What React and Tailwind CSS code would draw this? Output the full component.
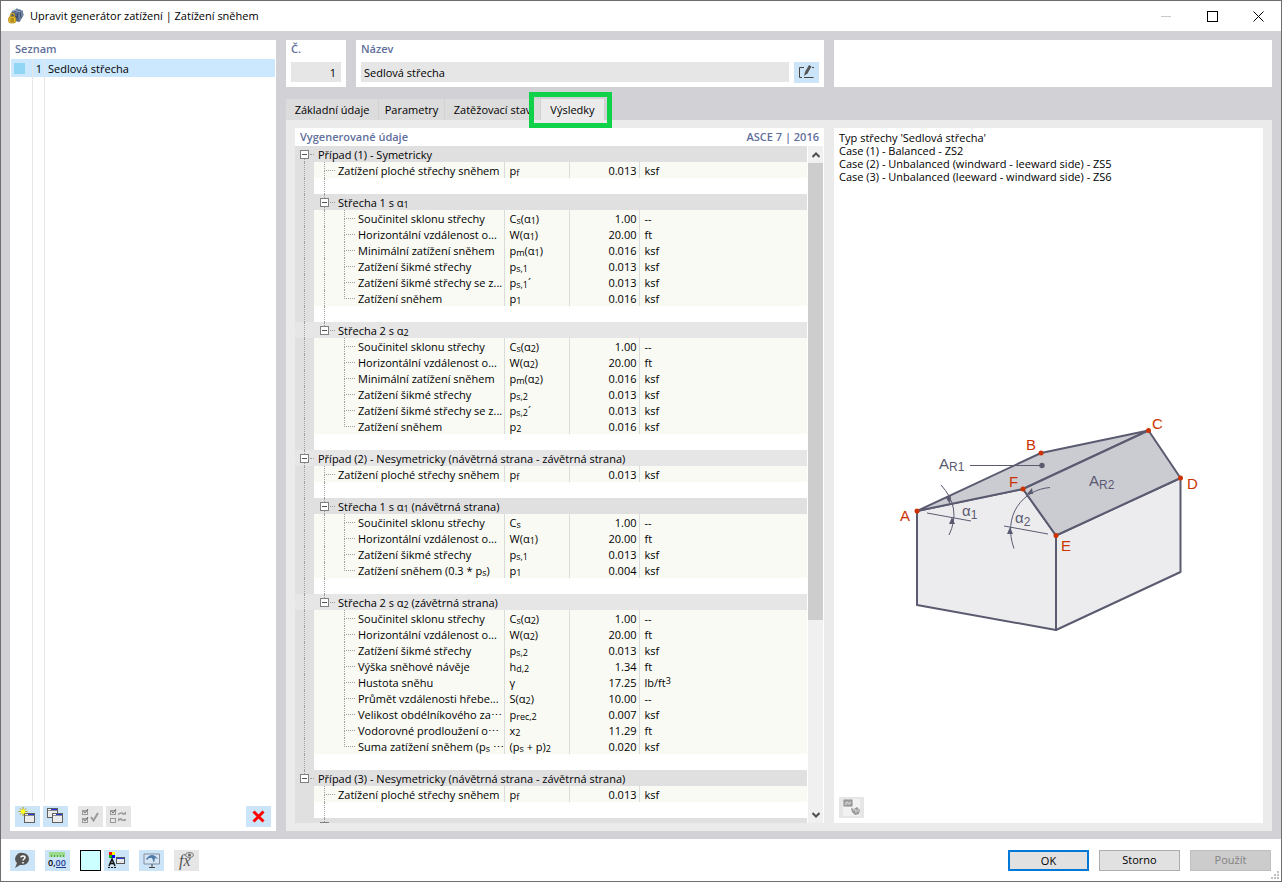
import { useState } from 'react';

const roof = (title, tone, last, rows) => ({ title, tone, last, rows });

const FLAT = ['Zatížení ploché střechy sněhem', 'p_{f}', '0.013', 'ksf'];

const cases = [
    {
        title: 'Případ (1) - Symetricky',
        tone: 'dark',
        roofs: [
            roof('Střecha 1 s α_{1}', 'dark', false, [
                ['Součinitel sklonu střechy', 'C_{s}(α_{1})', '1.00', '--'],
                ['Horizontální vzdálenost o...', 'W(α_{1})', '20.00', 'ft'],
                ['Minimální zatížení sněhem', 'p_{m}(α_{1})', '0.016', 'ksf'],
                ['Zatížení šikmé střechy', 'p_{s,1}', '0.013', 'ksf'],
                ['Zatížení šikmé střechy se z...', 'p_{s,1}´', '0.013', 'ksf'],
                ['Zatížení sněhem', 'p_{1}', '0.016', 'ksf'],
            ]),
            roof('Střecha 2 s α_{2}', 'light', true, [
                ['Součinitel sklonu střechy', 'C_{s}(α_{2})', '1.00', '--'],
                ['Horizontální vzdálenost o...', 'W(α_{2})', '20.00', 'ft'],
                ['Minimální zatížení sněhem', 'p_{m}(α_{2})', '0.016', 'ksf'],
                ['Zatížení šikmé střechy', 'p_{s,2}', '0.013', 'ksf'],
                ['Zatížení šikmé střechy se z...', 'p_{s,2}´', '0.013', 'ksf'],
                ['Zatížení sněhem', 'p_{2}', '0.016', 'ksf'],
            ]),
        ],
    },
    {
        title: 'Případ (2) - Nesymetricky (návětrná strana - závětrná strana)',
        tone: 'light',
        roofs: [
            roof('Střecha 1 s α_{1} (návětrná strana)', 'dark', false, [
                ['Součinitel sklonu střechy', 'C_{s}', '1.00', '--'],
                ['Horizontální vzdálenost o...', 'W(α_{1})', '20.00', 'ft'],
                ['Zatížení šikmé střechy', 'p_{s,1}', '0.013', 'ksf'],
                ['Zatížení sněhem (0.3 * p_{s})', 'p_{1}', '0.004', 'ksf'],
            ]),
            roof('Střecha 2 s α_{2} (závětrná strana)', 'light', true, [
                ['Součinitel sklonu střechy', 'C_{s}(α_{2})', '1.00', '--'],
                ['Horizontální vzdálenost o...', 'W(α_{2})', '20.00', 'ft'],
                ['Zatížení šikmé střechy', 'p_{s,2}', '0.013', 'ksf'],
                ['Výška sněhové návěje', 'h_{d,2}', '1.34', 'ft'],
                ['Hustota sněhu', 'γ', '17.25', 'lb/ft^{3}'],
                ['Průmět vzdálenosti hřebe...', 'S(α_{2})', '10.00', '--'],
                ['Velikost obdélníkového za⋯', 'p_{rec,2}', '0.007', 'ksf'],
                ['Vodorovné prodloužení o⋯', 'x_{2}', '11.29', 'ft'],
                ['Suma zatížení sněhem (p_{s} ⋯', '(p_{s} + p)_{2}', '0.020', 'ksf'],
            ]),
        ],
    },
    {
        title: 'Případ (3) - Nesymetricky (návětrná strana - závětrná strana)',
        tone: 'dark',
        last: true,
        roofs: [roof('Střecha 1 s α_{1} (závětrná strana)', 'dark', false, [])],
    },
];

// "p_{s}" -> p with a lowered s, "ft^{3}" -> ft with a raised 3
const Formula = ({ text }) =>
    text.split(/([_^]\{[^}]+\})/).map((part, i) => {
        if (part.startsWith('_{')) {
            return (
                <span key={i} className="relative top-px text-[9px] leading-none">
                    {part.slice(2, -1)}
                </span>
            );
        }
        if (part.startsWith('^{')) {
            return (
                <span key={i} className="relative -top-[3px] text-[9px] leading-none">
                    {part.slice(2, -1)}
                </span>
            );
        }
        return part;
    });

const CellText = ({ text }) => (
    <div className="h-4 leading-[18px] whitespace-pre">
        <Formula text={text} />
    </div>
);

const toneClass = { dark: 'bg-[#e0e0e0]', light: 'bg-[#e6e6e6]' };

const Toggle = ({ label, above, below }) => (
    <span className="flex h-4 items-center">
        <span className="flex w-[9px] flex-col items-center">
            <span className={`h-1 w-px border-dotted border-[#a0a0a0] ${above ? 'border-l' : ''}`} />
            <button
                aria-label={label}
                className="flex size-[9px] items-center justify-center border border-[#808080] bg-white"
            >
                <span className="h-px w-[5px] bg-[#505050]" />
            </button>
            <span className={`h-[3px] w-px border-dotted border-[#a0a0a0] ${below ? 'border-l' : ''}`} />
        </span>
        <span className="ml-px w-[5px] border-t border-dotted border-[#a0a0a0]" />
    </span>
);

const Branch = ({ last }) => (
    <span className="flex w-[14px] shrink-0 flex-col">
        <span className="h-[9px] w-[11px] border-b border-l border-dotted border-[#a0a0a0]" />
        <span className={`h-[7px] border-dotted border-[#a0a0a0] ${last ? '' : 'border-l'}`} />
    </span>
);

const Gutter = ({ line }) => (
    <td className="bg-[#e0e0e0] pl-[9px]">
        <div className={`h-4 border-dotted border-[#a0a0a0] ${line ? 'border-l' : ''}`} />
    </td>
);

const BlankRow = ({ gutterLine, line }) => (
    <tr className="h-4">
        <Gutter line={gutterLine} />
        <td colSpan={4} className="bg-white pl-[10px]">
            <div className={`h-4 border-dotted border-[#a0a0a0] ${line ? 'border-l' : ''}`} />
        </td>
    </tr>
);

const ValueRow = ({ row, level, gutterLine, line, last }) => (
    <tr className="h-4 bg-[#f9faf4]">
        <Gutter line={gutterLine} />
        <td className="overflow-hidden border-r border-[#dcdcdc] pl-[10px]">
            <div className="flex h-4">
                {level === 2 && (
                    <span className={`w-5 shrink-0 border-dotted border-[#a0a0a0] ${line ? 'border-l' : ''}`} />
                )}
                <Branch last={last} />
                <CellText text={row[0]} />
            </div>
        </td>
        <td className="border-r border-[#dcdcdc] pl-[5px]">
            <CellText text={row[1]} />
        </td>
        <td className="border-r border-[#dcdcdc] pr-[2px] text-right">
            <CellText text={row[2]} />
        </td>
        <td className="pl-[5px]">
            <CellText text={row[3]} />
        </td>
    </tr>
);

const CaseRows = ({ item, first }) => (
    <tbody>
        <tr className={`h-4 ${toneClass[item.tone]}`}>
            <td className="pl-[5px]">
                <Toggle label={item.title} above={!first} below={!item.last} />
            </td>
            <td colSpan={4} className="pl-1">
                <CellText text={item.title} />
            </td>
        </tr>
        <ValueRow row={FLAT} level={1} gutterLine={!item.last} />
        <BlankRow gutterLine={!item.last} line />
        {item.roofs.map((r) => (
            <RoofRows key={r.title} item={r} gutterLine={!item.last} />
        ))}
    </tbody>
);

const RoofRows = ({ item, gutterLine }) => (
    <>
        <tr className={`h-4 ${toneClass[item.tone]}`}>
            <td className="pl-[9px]">
                <div className={`h-4 border-dotted border-[#a0a0a0] ${gutterLine ? 'border-l' : ''}`} />
            </td>
            <td colSpan={4} className="pl-[6px]">
                <div className="flex h-4 gap-[3px]">
                    <Toggle label={item.title} above below={!item.last} />
                    <CellText text={item.title} />
                </div>
            </td>
        </tr>
        {item.rows.map((row, i) => (
            <ValueRow
                key={row[0]}
                row={row}
                level={2}
                gutterLine={gutterLine}
                line={!item.last}
                last={i === item.rows.length - 1}
            />
        ))}
        <BlankRow gutterLine={gutterLine} line={!item.last} />
    </>
);

const ToolButton = ({ label, disabled, children }) => (
    <button
        aria-label={label}
        disabled={disabled}
        className="flex h-[21px] w-[25px] items-center justify-center bg-[#cce4f7] disabled:bg-[#e6e6e6]"
    >
        <svg width="19" height="19" viewBox="0 0 19 19" fill="none">
            {children}
        </svg>
    </button>
);

const SmallWindow = ({ x, y }) => (
    <>
        <rect x={x + 0.5} y={y + 0.5} width="10" height="9" fill="#ececec" stroke="#606060" />
        <rect x={x + 1} y={y + 1} width="3" height="2" fill="#fff" />
        <rect x={x + 4} y={y + 1} width="6" height="1" fill="#2038e0" />
        <path d={`M${x + 1} ${y + 2.5}h9`} stroke="#8a8a8a" />
    </>
);

const AppIcon = () => (
    <svg width="16" height="16" viewBox="0 0 16 16">
        <path d="M4 3 9 .5l5.500 2L15.500 7l-4 7L7 13 2 8Z" fill="#53698c" />
        <path d="m4 3 5-2.500 5.500 2L10 5Z" fill="#a9bdd9" />
        <path d="M10 5 14.500 2.500 15.500 7l-4 7Z" fill="#71839f" />
        <path d="m6 3 5 1.500M8 1.500l5 1.500M3 6l6 3M10 5l-1 6M12 4l1 6" stroke="#2e405f" strokeWidth=".8" />
        <path d="M2.500 9V7.500a2 2 0 0 1 4 0V9" fill="none" stroke="#c49b1c" strokeWidth="1.300" />
        <rect x=".5" y="8.500" width="7.500" height="6.500" rx="2.500" fill="#e4b92d" stroke="#a37f17" strokeWidth=".7" />
        <path d="M2.500 11h3.500M2.500 13h3.500" stroke="#80640f" />
    </svg>
);

const RoofDrawing = () => (
    <svg
        viewBox="889 410 320 230"
        className="mx-auto w-[320px] max-w-full"
        role="img"
        aria-label="Sedlová střecha"
        fontFamily="Liberation Sans, Arial, sans-serif"
    >
        <g stroke="#5a5a70" strokeWidth="2" strokeLinejoin="round">
            <path d="M917 511 1023 489 1056 535.500V630L917 605Z" fill="#ececef" />
            <path d="M1056 535.500 1180.500 478V572L1056 630Z" fill="#ececef" />
            <path d="M917 511 1041 453 1148.500 430.500 1023 489Z" fill="#cbcbd2" />
            <path d="M1023 489 1148.500 430.500 1180.500 478 1056 535.500Z" fill="#cbcbd2" />
        </g>
        <g stroke="#5a5a70" fill="none">
            <path d="M970 465.500h72" />
            <path d="M941 485q21 23 8 50M927 513l44 8" />
            <path d="M1050 487.500c-27 2-48 28-36 61M1004 526l44 8" />
        </g>
        <g fill="#5a5a70">
            <circle cx="1042" cy="465.500" r="2.700" />
            <path d="m950 504-4-6 5-2ZM952 517l-3 7h6ZM1027 494l5-6 1 6ZM1010 527l-3 7h6Z" />
        </g>
        <g fill="#5a5a70" fontSize="15">
            <text x="939" y="469">
                A<tspan fontSize="12" dy="2">R1</tspan>
            </text>
            <text x="1089" y="486">
                A<tspan fontSize="12" dy="3">R2</tspan>
            </text>
            <text x="962" y="516">
                α<tspan fontSize="12" dy="3">1</tspan>
            </text>
            <text x="1015" y="523">
                α<tspan fontSize="12" dy="3">2</tspan>
            </text>
        </g>
        <g fill="#cc3300">
            <circle cx="917" cy="511" r="2.500" />
            <circle cx="1041" cy="453" r="2.500" />
            <circle cx="1148.500" cy="430.500" r="2.500" />
            <circle cx="1180.500" cy="478" r="2.500" />
            <circle cx="1056" cy="535.500" r="2.500" />
            <circle cx="1023" cy="489" r="2.500" />
            <g fontSize="15">
                <text x="900" y="521">A</text>
                <text x="1026" y="450">B</text>
                <text x="1152" y="429">C</text>
                <text x="1187" y="489">D</text>
                <text x="1061" y="551">E</text>
                <text x="1009" y="487">F</text>
            </g>
        </g>
    </svg>
);

const TABS = [
    { title: 'Základní údaje', width: 'w-[93px]' },
    { title: 'Parametry', width: 'w-[66px]' },
    { title: 'Zatěžovací stav', width: 'w-[96px]' },
    { title: 'Výsledky', width: 'w-[63px]' },
];

const Tabs = () => {
    const [active, setActive] = useState('Výsledky');

    return (
        <div role="tablist" className="flex h-[33px] shrink-0 items-end">
            {TABS.map(({ title, width }) => {
                const isActive = title === active;
                return (
                    <button
                        key={title}
                        role="tab"
                        aria-selected={isActive}
                        onClick={() => setActive(title)}
                        className={`relative h-[21px] whitespace-nowrap ${width} ${
                            isActive ? 'bg-[#ebebeb]' : 'border-r border-[#d2d1d6] bg-[#dcdcdc]'
                        }`}
                    >
                        {title}
                        {isActive && (
                            <span className="absolute -top-[7px] -right-2 -bottom-2 -left-3 border-5 border-[#10d24a]" />
                        )}
                    </button>
                );
            })}
        </div>
    );
};

const heading = 'font-semibold text-[#5f6f9b]';

const dialogButton = 'h-[21px] w-[81px] border border-[#adadad] bg-[#e1e1e1]';

export default function App() {
    return (
        <div className="flex h-screen flex-col overflow-hidden border border-[#6e6e6e] bg-white font-['Open_Sans','Noto_Sans',sans-serif] text-[11px] leading-4 text-black">
            <header className="flex h-[30px] shrink-0 items-center pl-[7px]">
                <AppIcon />
                <h1 className="ml-[6px] flex-1">Upravit generátor zatížení | Zatížení sněhem</h1>
                <button aria-label="Minimalizovat" disabled className="flex h-full w-[46px] items-center justify-center">
                    <span className="h-px w-[10px] bg-[#c8c8c8]" />
                </button>
                <button aria-label="Maximalizovat" className="flex h-full w-[46px] items-center justify-center">
                    <span className="size-[11px] border border-black" />
                </button>
                <button aria-label="Zavřít" className="flex h-full w-[46px] items-center justify-center">
                    <svg width="11" height="11" stroke="#000">
                        <path d="m.5.500 10 10m0-10-10 10" />
                    </svg>
                </button>
            </header>

            <main className="flex min-h-0 flex-1 gap-[10px] bg-[#d2d1d6] px-[9px] pt-[9px] pb-2">
                <aside className="flex w-[266px] shrink-0 flex-col bg-white">
                    <h2 className={`h-[19px] pt-px pl-[5px] ${heading}`}>Seznam</h2>
                    <div className="mx-px flex flex-1 flex-col">
                        <div className="flex h-[18px] bg-[#cce8ff] leading-5">
                            <span className="flex h-full w-[22px] items-center border-r border-[#e6e6e6] pl-[3px]">
                                <span className="size-[11px] bg-[#91d7f5]" />
                            </span>
                            <span className="w-3 border-r border-[#e6e6e6] pr-[2px] text-right">1</span>
                            <span className="pl-[3px]">Sedlová střecha</span>
                        </div>
                        <div className="flex flex-1">
                            <span className="w-[22px] border-r border-[#e6e6e6]" />
                            <span className="w-3 border-r border-[#e6e6e6]" />
                        </div>
                    </div>
                    <div className="flex gap-[3px] px-[5px] pt-[5px] pb-1">
                        <ToolButton label="Nový">
                            <SmallWindow x={6} y={6} />
                            <path d="M5 0v9M.5 4.500h9M2 1.500l6 6M8 1.500l-6 6" stroke="#b0a000" />
                            <circle cx="5" cy="4.500" r="2.200" fill="#ffff20" />
                        </ToolButton>
                        <ToolButton label="Kopírovat">
                            <SmallWindow x={1} y={1} />
                            <SmallWindow x={6} y={6} />
                        </ToolButton>
                        <span className="w-1" />
                        <ToolButton label="Vybrat vše" disabled>
                            <g stroke="#999">
                                <rect x="1.500" y="3.500" width="5" height="4" />
                                <rect x="1.500" y="11.500" width="5" height="4" />
                                <path d="m2.500 4 1.500 2 3-4M2.500 12 4 14l3-4" stroke="#666" />
                                <path d="m10 10 2.500 3.500L17 6" strokeWidth="2" />
                            </g>
                        </ToolButton>
                        <ToolButton label="Obrátit výběr" disabled>
                            <g stroke="#999">
                                <rect x="1.500" y="3.500" width="5" height="4" />
                                <rect x="1.500" y="11.500" width="5" height="4" />
                                <path d="m2.500 4 1.500 2 3-4" stroke="#666" />
                                <path d="M9 7.500q4-3 6 0M17 12.500q-4 2-6-1" strokeWidth="1.500" />
                                <path d="M13 7.500h4v-3ZM9 11.500h4l-4 3Z" fill="#999" stroke="none" />
                            </g>
                        </ToolButton>
                        <span className="flex-1" />
                        <ToolButton label="Smazat">
                            <path d="m4.500 4.500 10 10m0-10-10 10" stroke="#f00" strokeWidth="3" />
                        </ToolButton>
                    </div>
                </aside>

                <div className="flex min-w-0 flex-1 flex-col">
                    <div className="flex h-[47px] shrink-0 gap-[10px]">
                        <div className="w-[60px] bg-white px-[5px] pt-px">
                            <label htmlFor="number" className={`block h-[21px] ${heading}`}>
                                Č.
                            </label>
                            <input id="number" readOnly value="1" className="h-5 w-full bg-[#e6e6e6] pr-[5px] text-right" />
                        </div>
                        <div className="w-[468px] bg-white px-[5px] pt-px">
                            <label htmlFor="name" className={`block h-[21px] ${heading}`}>
                                Název
                            </label>
                            <div className="flex gap-[5px]">
                                <input
                                    id="name"
                                    readOnly
                                    value="Sedlová střecha"
                                    className="h-5 min-w-0 flex-1 bg-[#e6e6e6] px-[3px]"
                                />
                                <ToolButton label="Upravit název">
                                    <path d="M7 4.500H2.500v10H5M7 14.500h9.500M15 4.500h2" stroke="#444" />
                                    <path d="m7 13 1-4 4-7 2.500 1.500-4 7Z" fill="#555" />
                                </ToolButton>
                            </div>
                        </div>
                        <div className="flex-1 bg-white" />
                    </div>

                    <Tabs />

                    <div className="flex min-h-0 flex-1 gap-[10px] bg-[#ebebeb] px-[9px] py-2">
                        <section className="flex w-[529px] shrink-0 flex-col bg-white">
                            <h2 className={`flex h-[18px] shrink-0 justify-between px-[5px] pt-px ${heading}`}>
                                <span>Vygenerované údaje</span>
                                <span>ASCE 7 | 2016</span>
                            </h2>
                            <div className="flex min-h-0 flex-1 gap-px pr-px">
                                <div className="flex-1 overflow-hidden">
                                    <table className="w-full table-fixed whitespace-nowrap">
                                        <colgroup>
                                            <col className="w-[19px]" />
                                            <col className="w-[190px]" />
                                            <col className="w-[65px]" />
                                            <col className="w-[70px]" />
                                            <col />
                                        </colgroup>
                                        {cases.map((item, i) => (
                                            <CaseRows key={item.title} item={item} first={i === 0} />
                                        ))}
                                    </table>
                                </div>
                                <div className="flex w-[15px] flex-col bg-[#f0f0f0]">
                                    <button aria-label="Nahoru" className="flex h-[17px] items-center justify-center">
                                        <svg width="8" height="6" fill="none" stroke="#505050" strokeWidth="2">
                                            <path d="m.5 5 3.500-3.500L7.500 5" />
                                        </svg>
                                    </button>
                                    <div className="flex-1">
                                        <div className="h-[71%] bg-[#cdcdcd]" />
                                    </div>
                                    <button aria-label="Dolů" className="flex h-[17px] items-center justify-center">
                                        <svg width="8" height="6" fill="none" stroke="#505050" strokeWidth="2">
                                            <path d="M.5 1 4 4.500 7.500 1" />
                                        </svg>
                                    </button>
                                </div>
                            </div>
                        </section>

                        <section className="flex min-w-0 flex-1 flex-col bg-white px-[5px] pt-[3px] pb-[5px]">
                            <div className="leading-[13px]">
                                <p>Typ střechy 'Sedlová střecha'</p>
                                <p>Case (1) - Balanced - ZS2</p>
                                <p>Case (2) - Unbalanced (windward - leeward side) - ZS5</p>
                                <p>Case (3) - Unbalanced (leeward - windward side) - ZS6</p>
                            </div>
                            <div className="flex-1 pt-[227px]">
                                <RoofDrawing />
                            </div>
                            <div>
                                <ToolButton label="Zobrazit obrázek" disabled>
                                    <rect x="1" y="1" width="17" height="17" fill="#f2f2f2" />
                                    <rect x="2" y="2" width="8" height="6" fill="#aaa" stroke="#888" />
                                    <path d="m3 7 2-3 2 2 2-2" stroke="#ddd" />
                                    <path d="m9 10 3 1 3-2 3 3-1 4-4 1-3-3Z" fill="#999" />
                                    <path d="M11 12h3v3m2-4v3" stroke="#ddd" />
                                </ToolButton>
                            </div>
                        </section>
                    </div>
                </div>
            </main>

            <footer className="relative flex h-[42px] shrink-0 items-center gap-[10px] pr-[10px] pl-[9px]">
                <ToolButton label="Nápověda">
                    <path d="M10 2a6 6 0 0 1 0 12H7l-5 3 2-5A6 6 0 0 1 10 2Z" fill="#555" />
                    <path d="M8 6.500C8 4.500 12 4.500 12 6.500c0 1.500-2 1.500-2 3M10 11v1.500" stroke="#fff" strokeWidth="1.500" />
                </ToolButton>
                <ToolButton label="Jednotky a desetinná místa">
                    <rect x="1" y="1" width="16" height="5" fill="#9bdc8c" />
                    <path d="M3.500 4v2m3-2v2m3-2v2m3-2v2m3-2v2" stroke="#5c9c50" />
                    <text x="0" y="15" fontSize="9" fontWeight="600" fill="#000">
                        0,
                        <tspan fill="#1c3f94">00</tspan>
                    </text>
                    <path d="M8 16.500h10" stroke="#1c3f94" />
                </ToolButton>
                <div className="flex gap-[3px]">
                    <button aria-label="Barva" className="size-[21px] border border-black bg-[#ccffff]" />
                    <ToolButton label="Zobrazení">
                        <path d="M2 1h3v3H2Z" fill="#f00" />
                        <path d="M5 1h3v3H5Z" fill="#ff0" />
                        <path d="M2 4h3v3H2Z" fill="#0b0" />
                        <path d="M5 4h3v3H5Z" fill="#00f" />
                        <path d="m2 15 3-7 3 7M3.500 12.500h3" stroke="#111" strokeWidth="1.500" />
                        <path d="M1 16.500h8" stroke="#111" strokeDasharray="2 1" />
                        <rect x="9.500" y="6.500" width="8" height="6" fill="#e8e8e8" stroke="#555" />
                        <path d="M10 7.500h7" stroke="#2038e0" />
                    </ToolButton>
                </div>
                <ToolButton label="Náhled">
                    <path d="M2 3h15.500v10H2Z" fill="#d6e6f4" stroke="#8090a0" />
                    <path d="M4 8q6-8 12 0l-3-1-1 5-2-5-3 0-2 2Z" fill="#4f7ba8" />
                    <path d="M10 13v3m-3 .5h6" stroke="#444" />
                </ToolButton>
                <ToolButton label="Vzorce" disabled>
                    <text x="2" y="15" fontSize="16" fontStyle="italic" fill="#555" fontFamily="Liberation Serif, serif">
                        fx
                    </text>
                    <ellipse cx="12.500" cy="4" rx="4" ry="2.500" fill="#e6e6e6" stroke="#777" />
                    <circle cx="12.500" cy="4" r="1.500" fill="#666" />
                </ToolButton>
                <span className="flex-1" />
                <button className="h-[21px] w-[81px] border-2 border-[#0078d7] bg-[#e1e1e1] leading-[17px]">OK</button>
                <button className={dialogButton}>Storno</button>
                <button disabled className="h-[21px] w-[81px] border border-[#bfbfbf] bg-[#cccccc] text-[#838383]">
                    Použít
                </button>
                <svg width="8" height="8" fill="#bfbfbf" className="absolute right-[2px] bottom-[2px]">
                    <path d="M6 0h2v2H6ZM3 3h2v2H3ZM6 3h2v2H6ZM0 6h2v2H0ZM3 6h2v2H3ZM6 6h2v2H6Z" />
                </svg>
            </footer>
        </div>
    );
}
